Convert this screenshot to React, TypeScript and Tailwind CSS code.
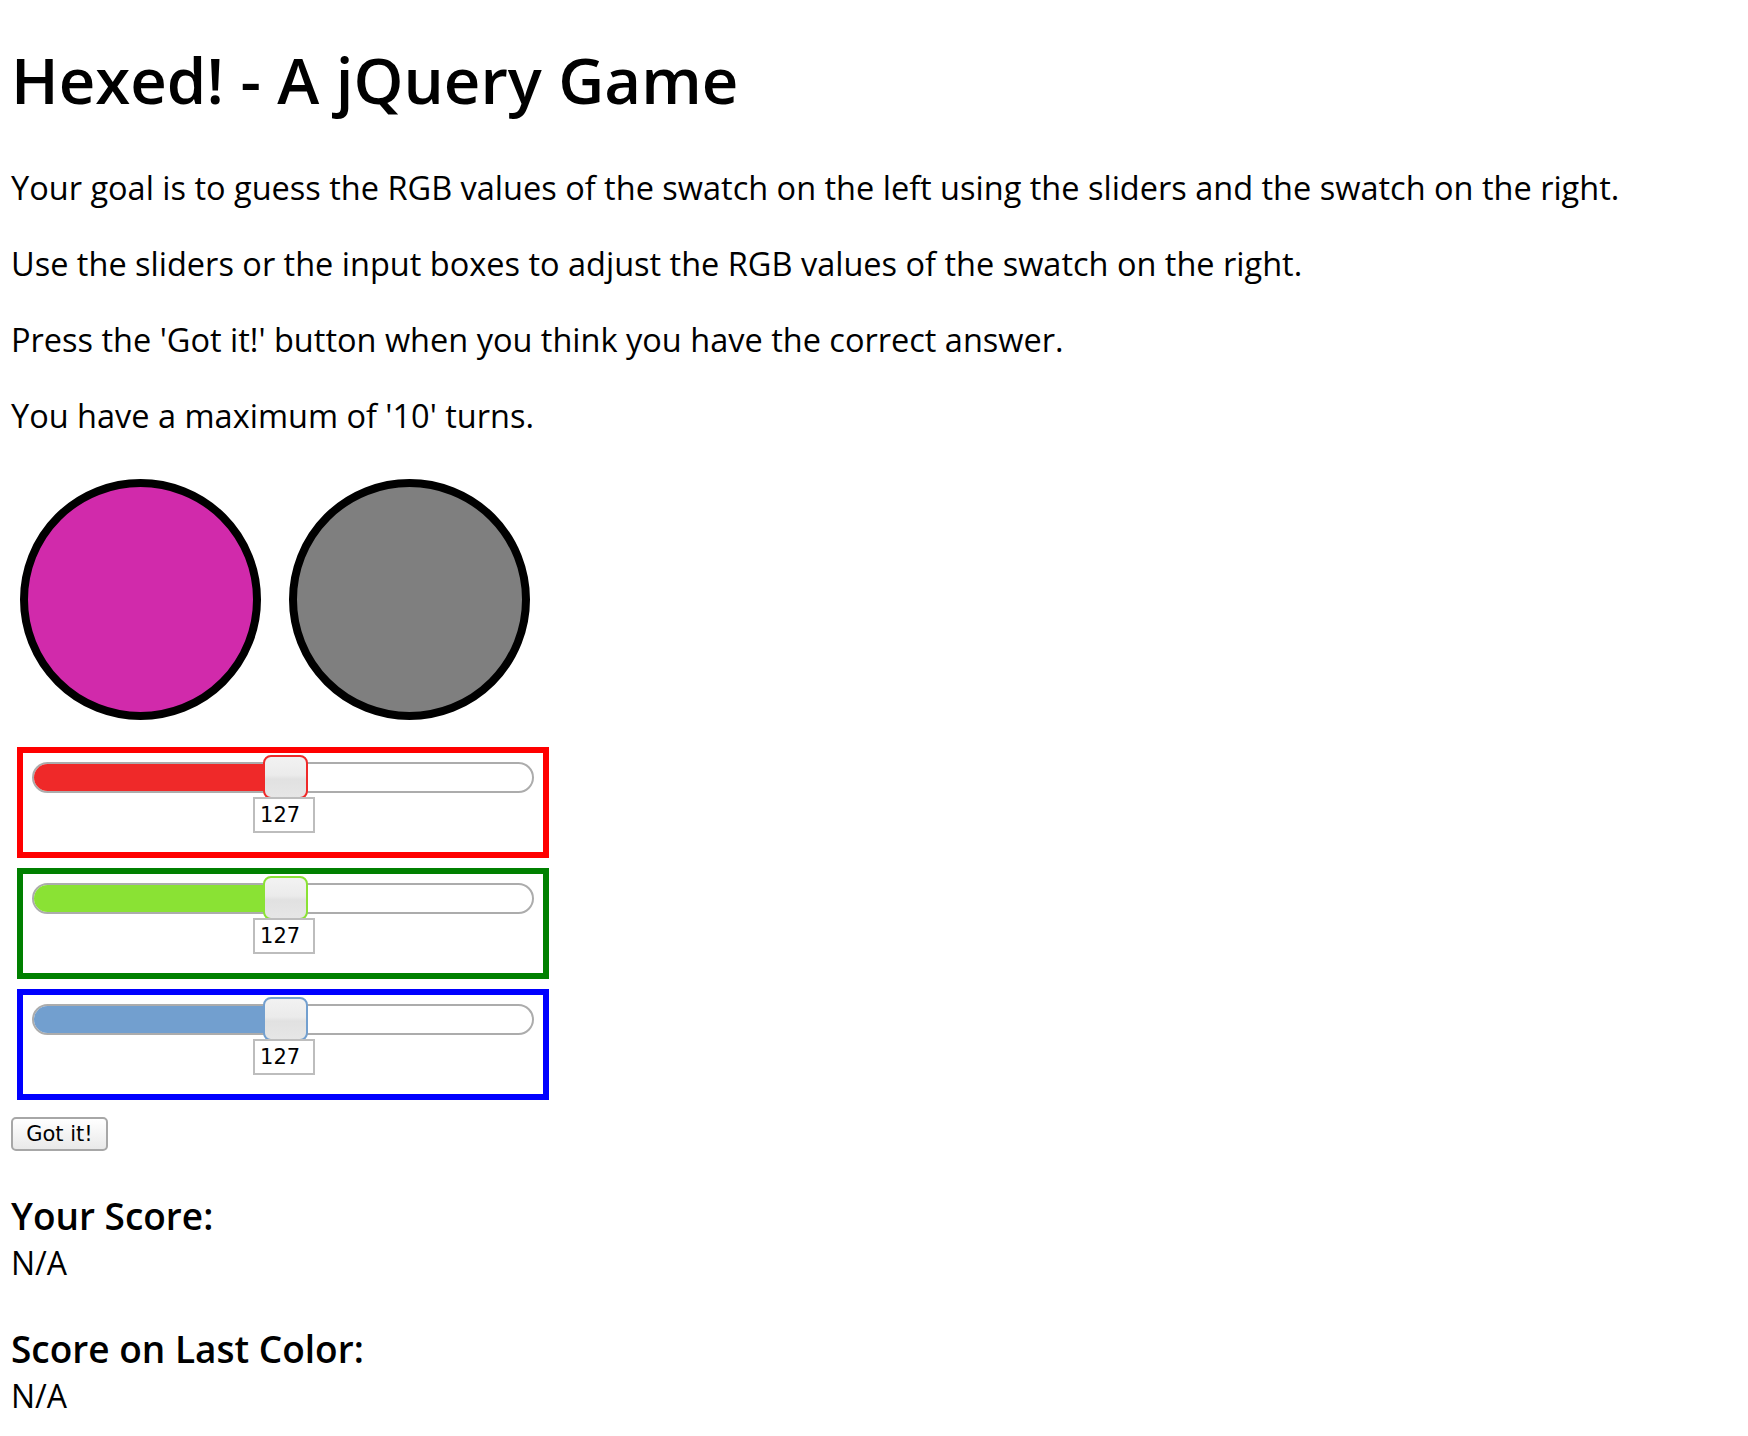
import { useState } from "react";

type Channel = {
  key: "r" | "g" | "b";
  frame: string;
  fill: string;
  thumb: string;
};

const channels: Channel[] = [
  { key: "r", frame: "border-[#ff0000]", fill: "bg-[#ef2929]", thumb: "border-[#ef2929]" },
  { key: "g", frame: "border-[#008000]", fill: "bg-[#8ae234]", thumb: "border-[#8ae234]" },
  { key: "b", frame: "border-[#0000ff]", fill: "bg-[#729fcf]", thumb: "border-[#729fcf]" },
];

function SliderBox({
  channel,
  value,
  onChange,
}: {
  channel: Channel;
  value: number;
  onChange: (v: number) => void;
}) {
  const pct = (value / 255) * 100;
  return (
    <div className={`h-[111px] border-[6px] ${channel.frame} px-[9px] pt-[9px]`}>
      <div className="relative h-[31px] rounded-full border-2 border-[#acacac] bg-white">
        <div
          className={`absolute inset-y-0 left-0 rounded-l-full ${channel.fill}`}
          style={{ width: `calc(${pct}% + 3px)` }}
        />
        <div
          className="absolute top-[-9px] ml-[3px] flex w-0 flex-col items-center"
          style={{ left: `${pct}%` }}
        >
          <div
            className={`h-[44px] w-[45px] shrink-0 rounded-[8px] border-2 ${channel.thumb} bg-[linear-gradient(180deg,#f2f2f2_0%,#ebebeb_45%,#e1e1e1_55%,#e6e6e6_100%)]`}
          />
          <input
            value={value}
            onChange={(e) => {
              const n = Math.max(0, Math.min(255, Number(e.target.value) || 0));
              onChange(n);
            }}
            className="ml-[-2px] mt-[-2px] h-[36px] w-[62px] shrink-0 border-2 border-[#bdbdbd] bg-white px-[5px] font-['DejaVu_Sans',sans-serif] text-[21px] text-black outline-none"
          />
        </div>
      </div>
    </div>
  );
}

export default function App() {
  const [rgb, setRgb] = useState({ r: 127, g: 127, b: 127 });

  return (
    <div className="min-h-screen bg-white pl-[11px] pt-[35px] font-['Open_Sans',sans-serif] text-black">
      <h1 className="text-[63.5px] font-semibold leading-[90px]">Hexed! - A jQuery Game</h1>

      <div className="mt-[43px] flex flex-col gap-[36px] text-[32.5px] leading-[40px]">
        <p>
          Your goal is to guess the RGB values of the swatch on the left using the sliders and the
          swatch on the right.
        </p>
        <p>Use the sliders or the input boxes to adjust the RGB values of the swatch on the right.</p>
        <p>Press the 'Got it!' button when you think you have the correct answer.</p>
        <p>You have a maximum of '10' turns.</p>
      </div>

      <div className="ml-[9px] mt-[43px] flex gap-[28px]">
        <div className="size-[241px] rounded-full border-[8px] border-black bg-[#d12aab]" />
        <div
          className="size-[241px] rounded-full border-[8px] border-black"
          style={{ backgroundColor: `rgb(${rgb.r}, ${rgb.g}, ${rgb.b})` }}
        />
      </div>

      <div className="ml-[6px] mt-[27px] flex w-[532px] flex-col gap-[10px]">
        {channels.map((c) => (
          <SliderBox
            key={c.key}
            channel={c}
            value={rgb[c.key]}
            onChange={(v) => setRgb((prev) => ({ ...prev, [c.key]: v }))}
          />
        ))}
      </div>

      <button className="mt-[17px] block h-[34px] w-[97px] rounded-[5px] border-2 border-[#a7a7a7] bg-[linear-gradient(180deg,#ffffff,#e9e9e9)] font-['DejaVu_Sans',sans-serif] text-[21px] leading-none text-black">
        Got it!
      </button>

      <h3 className="mt-[42px] text-[37px] font-semibold leading-[46px]">Your Score:</h3>
      <div className="mt-[4px] text-[32px] leading-[40px]">N/A</div>

      <h3 className="mt-[43px] text-[37px] font-semibold leading-[46px]">Score on Last Color:</h3>
      <div className="mt-[4px] text-[32px] leading-[40px]">N/A</div>
    </div>
  );
}
